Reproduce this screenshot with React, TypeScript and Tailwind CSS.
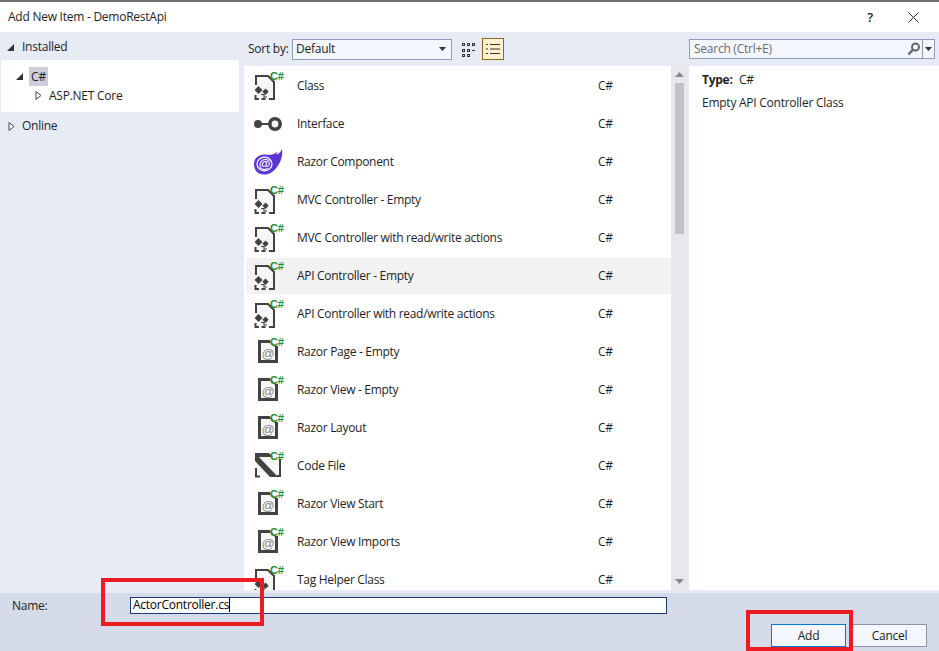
import React from "react";

const FONT = { fontFamily: '"Open Sans", "Noto Sans", sans-serif' };

function CSharp() {
  return (
    <text x="20" y="11.500" fontSize="11" fontWeight="700" fill="#2b8a2b" fontFamily="'Liberation Sans', sans-serif">
      C#
    </text>
  );
}

function ClassIcon() {
  return (
    <svg width="36" height="36" viewBox="0 0 36 36">
      <path d="M6 18V8h12l6 6v17H6z" fill="#f6f6f6" />
      <path d="M6 17V8h12l6 6v17h-5" fill="none" stroke="#424242" strokeWidth="2" />
      <path d="M5.500 27v4h3.500M11.500 31h4" fill="none" stroke="#424242" strokeWidth="2" />
      <path d="M8.500 18l4 4-4 4-4-4z" fill="#424242" />
      <path d="M15.500 20.500l3.200 3.200-3.200 3.200-3.200-3.200z" fill="#424242" />
      <path d="M11 26.500h3v2.500h3" fill="none" stroke="#424242" strokeWidth="1.200" />
      <CSharp />
    </svg>
  );
}

function InterfaceIcon() {
  return (
    <svg width="36" height="36" viewBox="0 0 36 36">
      <circle cx="8" cy="18" r="4" fill="#424242" />
      <path d="M10 18h10" stroke="#424242" strokeWidth="2" />
      <circle cx="25" cy="18" r="5.200" fill="#f6f6f6" stroke="#424242" strokeWidth="3.600" />
    </svg>
  );
}

function BlazorIcon() {
  return (
    <svg width="36" height="36" viewBox="0 0 36 36">
      <path
        d="M4 20c0-6 5-9.500 10-9.500 3 0 5 .5 7 .2 3-.5 5-1.700 6-3.200 0 1-.2 2-1 3 2.500-.5 4.500-2 6-5.500 1 6-1 13-5 18-3.500 5-8 7.500-13 7.500-6 0-10-4-10-10.500z"
        fill="#5b35d5"
      />
      <ellipse cx="14.500" cy="20" rx="7.500" ry="6.800" fill="none" stroke="#fff" strokeWidth="1.200" />
      <text x="14.500" y="24" textAnchor="middle" fontSize="12" fontWeight="700" fill="#fff" fontFamily="'Liberation Sans', sans-serif">
        @
      </text>
    </svg>
  );
}

function RazorIcon() {
  return (
    <svg width="36" height="36" viewBox="0 0 36 36">
      <path d="M9.500 7.500h12l5 5v15h-17z" fill="#f6f6f6" stroke="#424242" strokeWidth="3" />
      <path d="M20 3h12v9h-6l-6-5z" fill="#fff" />
      <path d="M20 8.500l4.500 3" stroke="#9a9a9a" strokeWidth="1" />
      <text x="18" y="24" textAnchor="middle" fontSize="13" fill="#8a8a8a" fontFamily="'Liberation Sans', sans-serif">
        @
      </text>
      <CSharp />
    </svg>
  );
}

function CodeIcon() {
  return (
    <svg width="36" height="36" viewBox="0 0 36 36">
      <path d="M6 8h24v21H6z" fill="#f6f6f6" />
      <path d="M5 5h14l4 4H5z" fill="#424242" />
      <path d="M5 9l3-1 20 21h-8L5 13z" fill="#424242" />
      <path d="M30 11v17h-3M6 20v8.500h4" fill="none" stroke="#424242" strokeWidth="2" />
      <CSharp />
    </svg>
  );
}

type Kind = "class" | "iface" | "blazor" | "razor" | "code";

const ITEMS: { name: string; kind: Kind; selected?: boolean }[] = [
  { name: "Class", kind: "class" },
  { name: "Interface", kind: "iface" },
  { name: "Razor Component", kind: "blazor" },
  { name: "MVC Controller - Empty", kind: "class" },
  { name: "MVC Controller with read/write actions", kind: "class" },
  { name: "API Controller - Empty", kind: "class", selected: true },
  { name: "API Controller with read/write actions", kind: "class" },
  { name: "Razor Page - Empty", kind: "razor" },
  { name: "Razor View - Empty", kind: "razor" },
  { name: "Razor Layout", kind: "razor" },
  { name: "Code File", kind: "code" },
  { name: "Razor View Start", kind: "razor" },
  { name: "Razor View Imports", kind: "razor" },
  { name: "Tag Helper Class", kind: "class" },
];

function ItemIcon({ kind }: { kind: Kind }) {
  if (kind === "class") return <ClassIcon />;
  if (kind === "iface") return <InterfaceIcon />;
  if (kind === "blazor") return <BlazorIcon />;
  if (kind === "razor") return <RazorIcon />;
  return <CodeIcon />;
}

function Arrow({ open }: { open?: boolean }) {
  return open ? (
    <svg width="9" height="9" viewBox="0 0 9 9">
      <path d="M8 1v7H1z" fill="#333" />
    </svg>
  ) : (
    <svg width="9" height="11" viewBox="0 0 9 11">
      <path d="M2 1.500l5 4-5 4z" fill="#fff" stroke="#444" />
    </svg>
  );
}

function Caret() {
  return (
    <svg width="7" height="4" viewBox="0 0 7 4">
      <path d="M0 0h7L3.500 4z" fill="#333" />
    </svg>
  );
}

export default function App() {
  return (
    <div
      style={FONT}
      className="relative flex h-[651px] w-[939px] flex-col overflow-hidden bg-white text-[12px] leading-none tracking-[-0.25px] text-[#1e1e1e]"
    >
      <div className="h-0.5 bg-[#6f6f6f]" />
      <div className="flex h-[30px] items-center pl-2 pr-[20px]">
        <span className="flex-1">Add New Item - DemoRestApi</span>
        <span className="mr-[35px] text-[13px] font-semibold">?</span>
        <svg width="11" height="11" viewBox="0 0 11 11">
          <path d="M.5.500l10 10M10.500.500l-10 10" stroke="#222" />
        </svg>
      </div>

      <div className="flex min-h-0 flex-1 bg-[#e6ebf5] pb-[3px]">
        {/* Left tree */}
        <div className="w-[244px] shrink-0 pt-[5px]">
          <div className="mb-[3px] flex h-[20px] items-center gap-[7px] pl-[6px]">
            <Arrow open />
            <span>Installed</span>
          </div>
          <div className="mr-[5px] ml-px h-[52px] bg-white pt-[7px]">
            <div className="flex h-[19px] items-center pl-[14px]">
              <Arrow open />
              <span className="ml-[5px] flex h-[19px] w-[19px] items-center justify-center bg-[#cccedb]">C#</span>
            </div>
            <div className="flex h-[19px] items-center pl-[33px]">
              <Arrow />
              <span className="ml-[6px]">ASP.NET Core</span>
            </div>
          </div>
          <div className="mt-[4px] flex h-[20px] items-center gap-[6px] pl-[7px]">
            <Arrow />
            <span>Online</span>
          </div>
        </div>

        {/* Center */}
        <div className="flex w-[445px] shrink-0 flex-col">
          <div className="flex h-[34px] shrink-0 items-center pl-[4px]">
            <span className="w-[44px]">Sort by:</span>
            <div className="flex h-[21px] w-[160px] items-center justify-between border border-[#8e9bbc] bg-[#f3f6fd] pr-[5px] pl-[3px]">
              <span>Default</span>
              <Caret />
            </div>
            <svg className="ml-[9px]" width="15" height="15" viewBox="0 0 15 15" shapeRendering="crispEdges">
              <path d="M1.500 1.500h2v2h-2zM6.500 1.500h2v2h-2zM11.500 1.500h2v2h-2zM1.500 7.500h2v2h-2zM6.500 7.500h2v2h-2zM1.500 12.500h2v2h-2zM6.500 12.500h2v2h-2z" fill="none" stroke="#333" strokeWidth="1" />
              <path d="M11 8.500h3" stroke="#333" />
            </svg>
            <div className="ml-[6px] flex h-[22px] w-[22px] items-center justify-center border border-[#8a6a1e] bg-[#fff0d0]">
              <svg width="14" height="12" viewBox="0 0 14 12">
                <path d="M0 1.500h2M4 1.500h10M0 6h2M4 6h10M0 10.500h2M4 10.500h10" stroke="#333" />
              </svg>
            </div>
          </div>
          <div className="flex min-h-0 flex-1 bg-white">
            <div className="w-[427px] shrink-0 overflow-hidden pt-px pl-[2px]">
              {ITEMS.map((item) => (
                <div key={item.name} className="flex h-[38px] items-center py-px">
                  <div className={`flex h-[36px] w-full items-center ${item.selected ? "bg-[#f2f2f2]" : ""}`}>
                    <div className="ml-[4px] w-[47px] shrink-0">
                      <ItemIcon kind={item.kind} />
                    </div>
                    <span className="w-[301px] shrink-0 tracking-[-0.3px]">{item.name}</span>
                    <span>C#</span>
                  </div>
                </div>
              ))}
            </div>
            <div className="flex w-[17px] shrink-0 flex-col items-center bg-[#e8e8ec] pt-[6px] pb-[6px]">
              <svg width="9" height="5" viewBox="0 0 9 5">
                <path d="M4.500 0L9 5H0z" fill="#86898f" />
              </svg>
              <div className="mt-[6px] h-[151px] w-[9px] bg-[#c2c3c9]" />
              <div className="flex-1" />
              <svg width="9" height="5" viewBox="0 0 9 5">
                <path d="M0 0h9L4.500 5z" fill="#86898f" />
              </svg>
            </div>
            <div className="w-px bg-[#e6ebf5]" />
          </div>
        </div>

        {/* Right */}
        <div className="flex min-w-0 flex-1 flex-col">
          <div className="flex h-[34px] shrink-0 items-center">
            <div className="flex h-[20px] w-[246px] items-center border border-[#8e9bbc] bg-[#f3f6fd] pl-[4px]">
              <span className="flex-1 text-[#6d6d6d]">Search (Ctrl+E)</span>
              <svg width="14" height="14" viewBox="0 0 14 14">
                <circle cx="8.500" cy="5" r="3.500" fill="none" stroke="#666" strokeWidth="2" />
                <path d="M6 7.500L1.500 12.500" stroke="#666" strokeWidth="2.500" />
              </svg>
              <div className="ml-px flex h-full w-[12px] items-center justify-center border-l border-[#8e9bbc]">
                <Caret />
              </div>
            </div>
          </div>
          <div className="min-h-0 flex-1 bg-white pt-[7px] pl-[13px]">
            <div className="flex h-[14px] items-center">
              <span className="w-[37px] font-bold">Type:</span>
              <span>C#</span>
            </div>
            <div className="mt-[10px]">Empty API Controller Class</div>
          </div>
        </div>
      </div>

      {/* Footer */}
      <div className="relative h-[58px] shrink-0 bg-[#d6dbe9]">
        <div className="flex h-[24px] items-center pl-[12px]">
          <span className="w-[118px] pt-px">Name:</span>
          <div className="flex h-[17px] w-[537px] items-center border border-[#1b3a7a] bg-white pl-[2px] text-black">
            <span>ActorController.cs</span>
            <span className="h-[14px] w-px bg-black" />
          </div>
        </div>
        <div className="mt-[7px] flex justify-end pr-[12px]">
          <button className="h-[23px] w-[75px] border border-[#0078d7] bg-[#f3f6fd]">Add</button>
          <button className="ml-[6px] h-[23px] w-[75px] border border-[#8a93a8] bg-[#f3f6fd]">Cancel</button>
        </div>
      </div>

      {/* Red annotations */}
      <div className="absolute top-[578px] left-[101px] h-[48px] w-[163px] border-4 border-[#ed1c24]" />
      <div className="absolute top-[610px] left-[746px] h-[41px] w-[107px] border-4 border-[#ed1c24]" />
    </div>
  );
}
